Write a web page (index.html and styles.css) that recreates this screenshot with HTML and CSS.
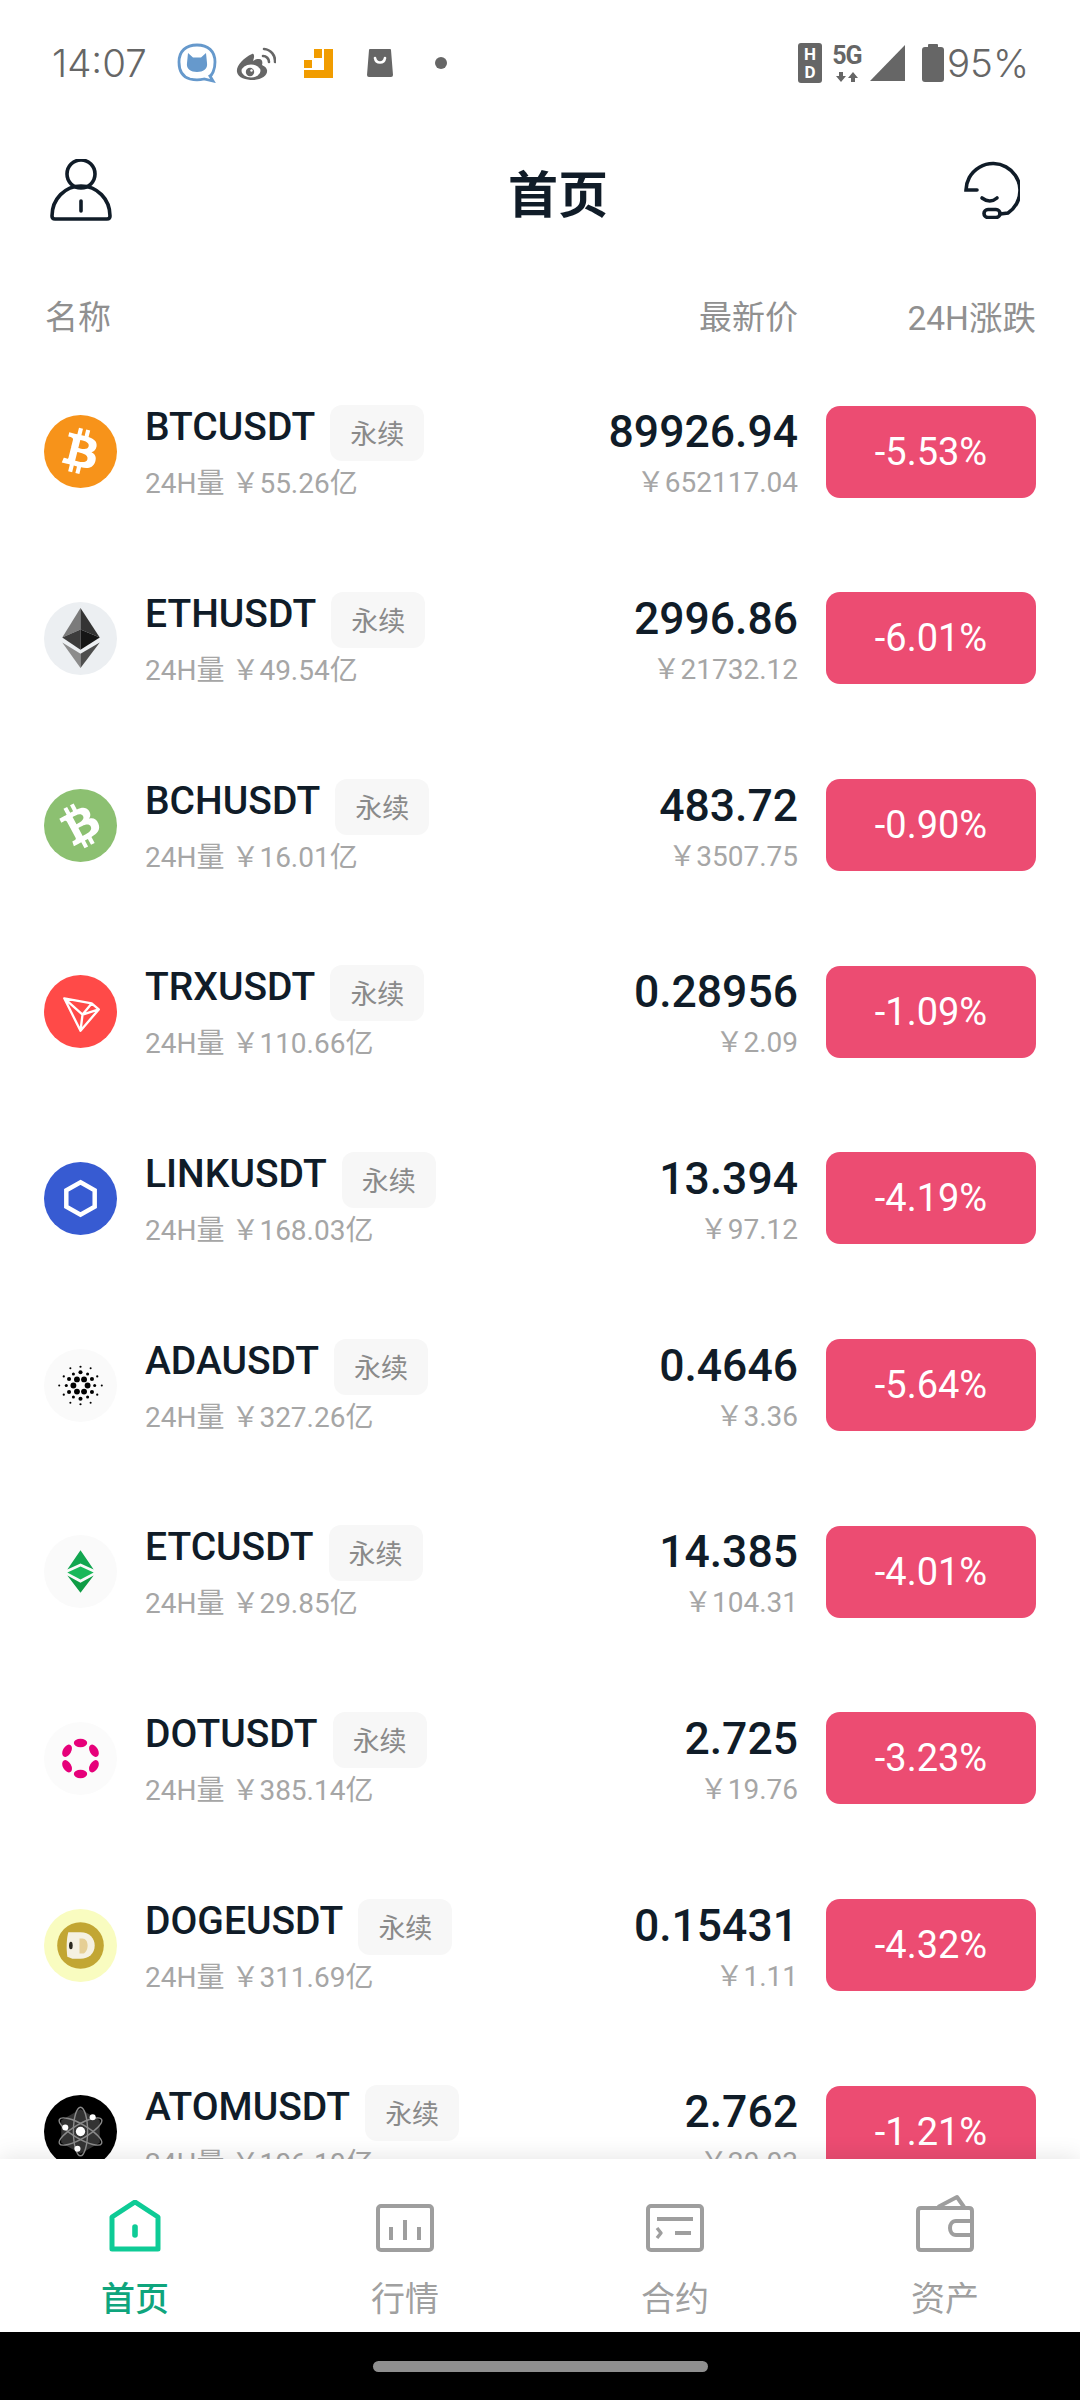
FILE: index.html
```html
<!DOCTYPE html>
<html>
<head>
    <title>首页</title>
    <meta charset="UTF-8">
    <link rel="stylesheet" href="styles.css">
</head>
<body>
    <!-- 状态栏 -->
    <div class="status-bar">
        <span class="status-time">14:07</span>
        <svg class="st-cat" width="40" height="40" viewBox="0 0 40 40">
            <path d="M20 2C31 2 38 8 38 19C38 27 35 32 33 33L36 38L27 36C23 37 17 37 13 36C6 34 2 28 2 19C2 8 9 2 20 2Z" fill="#fff" stroke="#6699cc" stroke-width="2.8"/>
            <path d="M11 10L16 14.5H24L29 10L30 20C31 26 26 29 20 29C14 29 9 26 10 20Z" fill="#6699cc"/>
        </svg>
        <svg class="st-weibo" width="40" height="33" viewBox="0 0 40 33">
            <path d="M16 7C7 11 0 19 1 25C2 31 10 33 17 33C26 33 32 28 31 23C30 19 27 19 26 18C27 15 26 12 23 12C20 12 18 13 17 14C19 9 18 6 16 7Z" fill="#666"/>
            <ellipse cx="15" cy="24" rx="9.5" ry="6.5" fill="#fff"/>
            <circle cx="14" cy="25" r="4.2" fill="#666"/>
            <circle cx="15.5" cy="23.5" r="1.2" fill="#fff"/>
            <path d="M27 9A6 6 0 0 1 33 15M28 2A12 12 0 0 1 39 15" fill="none" stroke="#666" stroke-width="2.6" stroke-linecap="round"/>
        </svg>
        <svg class="st-orange" width="29" height="29" viewBox="0 0 29 29" fill="#f19c00">
            <rect x="10" y="0" width="8" height="9"/>
            <rect x="0" y="11" width="8" height="8"/>
            <path d="M20 0H29V29H0V21H20Z"/>
        </svg>
        <svg class="st-bag" width="26" height="28" viewBox="0 0 26 28">
            <path d="M3 0H23Q24 0 24 1L26 26Q26 28 24 28H2Q0 28 0 26L2 1Q2 0 3 0Z" fill="#666"/>
            <path d="M8 9C9 15 17 15 18 9" fill="none" stroke="#fff" stroke-width="2.6" stroke-linecap="round"/>
        </svg>
        <span class="status-dot"></span>

        <div class="status-right">
            <div class="st-hd"><span>H</span><span>D</span></div>
            <div class="st-net">
                <span class="st-5g">5G</span>
                <svg width="22" height="10" viewBox="0 0 22 10" fill="#666">
                    <path d="M3 0H7V4H10L5 10L0 4H3Z"/>
                    <path d="M15 10H19V6H22L17 0L12 6H15Z"/>
                </svg>
            </div>
            <svg class="st-signal" width="35" height="36" viewBox="0 0 35 36"><path d="M35 0V36H0Z" fill="#666"/></svg>
            <svg class="st-battery" width="22" height="38" viewBox="0 0 22 38" fill="#666">
                <rect x="6" y="0" width="10" height="4" rx="1"/>
                <rect x="0" y="3" width="22" height="35" rx="3"/>
            </svg>
            <span class="status-battery">95%</span>
        </div>
    </div>

    <!-- 标题栏 -->
    <div class="header">
        <svg class="head-icon" width="62" height="62" viewBox="0 0 62 62" fill="none" stroke="#101c28" stroke-width="3.6" stroke-linecap="round">
            <circle cx="31" cy="15" r="14"/>
            <path d="M5 60H57C59 60 60 59 60 57C60 40 47 27 31 27C15 27 2 40 2 57C2 59 3 60 5 60Z"/>
            <path d="M31 42V52"/>
        </svg>
        <h1 class="title">首页</h1>
        <svg class="head-icon" width="56" height="58" viewBox="0 0 56 58" fill="none" stroke="#101c28" stroke-width="3.6" stroke-linecap="round">
            <path d="M13 29H2A27 27 0 1 1 44 52L36 53"/>
            <rect x="20" y="48.5" width="16" height="8" rx="4"/>
            <path d="M18 37Q26 43 33 37"/>
        </svg>
    </div>

    <div class="col-head">
        <span class="col-name">名称</span>
        <span>最新价</span>
        <span class="col-change">24H涨跌</span>
    </div>

    <div class="list">
        <div class="row">
            <svg class="coin" viewBox="0 0 72 72">
                <circle cx="36" cy="36" r="36" fill="#f7931a"/>
                <g transform="scale(1.125)"><path fill="#fff" d="M46.103 27.444c.637-4.258-2.605-6.547-7.038-8.074l1.438-5.768-3.511-.875-1.4 5.616c-.923-.23-1.871-.447-2.813-.662l1.41-5.653-3.509-.875-1.439 5.766c-.764-.174-1.514-.346-2.242-.527l.004-.018-4.842-1.209-.934 3.75s2.605.597 2.55.634c1.422.355 1.679 1.296 1.636 2.042l-1.638 6.571c.098.025.225.061.365.117l-.371-.092-2.296 9.205c-.174.432-.615 1.08-1.609.834.035.051-2.552-.637-2.552-.637l-1.743 4.019 4.569 1.139c.85.213 1.683.436 2.503.646l-1.453 5.834 3.507.875 1.439-5.772c.958.26 1.888.5 2.798.726l-1.434 5.745 3.511.875 1.453-5.823c5.987 1.133 10.489.676 12.384-4.739 1.527-4.36-.076-6.875-3.226-8.515 2.294-.529 4.022-2.038 4.483-5.155zM38.08 38.69c-1.085 4.36-8.426 2.003-10.806 1.412l1.928-7.729c2.38.594 10.012 1.77 8.878 6.317zm1.086-11.309c-.99 3.966-7.1 1.951-9.082 1.457l1.748-7.01c1.982.494 8.365 1.416 7.334 5.553z"/></g>
            </svg>
            <div class="info">
                <div class="name-line"><span class="name">BTCUSDT</span><span class="tag">永续</span></div>
                <div class="sub">24H量 ￥55.26亿</div>
            </div>
            <div class="price-box">
                <div class="price">89926.94</div>
                <div class="sub">￥652117.04</div>
            </div>
            <div class="change">-5.53%</div>
        </div>

        <div class="row">
            <svg class="coin" viewBox="0 0 72 72">
                <circle cx="36" cy="36" r="36" fill="#eceff2"/>
                <path d="M36 6L18 35L36 27Z" fill="#7b7b7b"/>
                <path d="M36 6L55 35L36 27Z" fill="#343434"/>
                <path d="M18 35L36 27V47Z" fill="#3c3c3c"/>
                <path d="M55 35L36 27V47Z" fill="#151515"/>
                <path d="M18 40L36 51V65Z" fill="#8c8c8c"/>
                <path d="M55 40L36 51V65Z" fill="#4e4e4e"/>
            </svg>
            <div class="info">
                <div class="name-line"><span class="name">ETHUSDT</span><span class="tag">永续</span></div>
                <div class="sub">24H量 ￥49.54亿</div>
            </div>
            <div class="price-box">
                <div class="price">2996.86</div>
                <div class="sub">￥21732.12</div>
            </div>
            <div class="change">-6.01%</div>
        </div>

        <div class="row">
            <svg class="coin" viewBox="0 0 72 72">
                <circle cx="36" cy="36" r="36" fill="#8cc071"/>
                <g transform="rotate(-42 36 36) scale(1.125)"><path fill="#fff" d="M46.103 27.444c.637-4.258-2.605-6.547-7.038-8.074l1.438-5.768-3.511-.875-1.4 5.616c-.923-.23-1.871-.447-2.813-.662l1.41-5.653-3.509-.875-1.439 5.766c-.764-.174-1.514-.346-2.242-.527l.004-.018-4.842-1.209-.934 3.75s2.605.597 2.55.634c1.422.355 1.679 1.296 1.636 2.042l-1.638 6.571c.098.025.225.061.365.117l-.371-.092-2.296 9.205c-.174.432-.615 1.08-1.609.834.035.051-2.552-.637-2.552-.637l-1.743 4.019 4.569 1.139c.85.213 1.683.436 2.503.646l-1.453 5.834 3.507.875 1.439-5.772c.958.26 1.888.5 2.798.726l-1.434 5.745 3.511.875 1.453-5.823c5.987 1.133 10.489.676 12.384-4.739 1.527-4.36-.076-6.875-3.226-8.515 2.294-.529 4.022-2.038 4.483-5.155zM38.08 38.69c-1.085 4.36-8.426 2.003-10.806 1.412l1.928-7.729c2.38.594 10.012 1.77 8.878 6.317zm1.086-11.309c-.99 3.966-7.1 1.951-9.082 1.457l1.748-7.01c1.982.494 8.365 1.416 7.334 5.553z"/></g>
            </svg>
            <div class="info">
                <div class="name-line"><span class="name">BCHUSDT</span><span class="tag">永续</span></div>
                <div class="sub">24H量 ￥16.01亿</div>
            </div>
            <div class="price-box">
                <div class="price">483.72</div>
                <div class="sub">￥3507.75</div>
            </div>
            <div class="change">-0.90%</div>
        </div>

        <div class="row">
            <svg class="coin" viewBox="0 0 72 72">
                <circle cx="36" cy="36" r="36" fill="#ff4a48"/>
                <path d="M20 23L47 28L54 34L36 55Z M20 23L38 39L36 55 M38 39L47 28 M38 39L54 34" fill="none" stroke="#fff" stroke-width="2.3" stroke-linejoin="round"/>
            </svg>
            <div class="info">
                <div class="name-line"><span class="name">TRXUSDT</span><span class="tag">永续</span></div>
                <div class="sub">24H量 ￥110.66亿</div>
            </div>
            <div class="price-box">
                <div class="price">0.28956</div>
                <div class="sub">￥2.09</div>
            </div>
            <div class="change">-1.09%</div>
        </div>

        <div class="row">
            <svg class="coin" viewBox="0 0 72 72">
                <circle cx="36" cy="36" r="36" fill="#375bd2"/>
                <path d="M36 20L50 28V44L36 52L22 44V28Z" fill="none" stroke="#fff" stroke-width="4.4"/>
            </svg>
            <div class="info">
                <div class="name-line"><span class="name">LINKUSDT</span><span class="tag">永续</span></div>
                <div class="sub">24H量 ￥168.03亿</div>
            </div>
            <div class="price-box">
                <div class="price">13.394</div>
                <div class="sub">￥97.12</div>
            </div>
            <div class="change">-4.19%</div>
        </div>

        <div class="row">
            <svg class="coin" viewBox="0 0 72 72">
                <circle cx="36" cy="36" r="36" fill="#fafafa"/>
                <g fill="#000">
                    <circle cx="43" cy="36" r="2.9"/><circle cx="39.5" cy="42" r="2.9"/><circle cx="32.5" cy="42" r="2.9"/><circle cx="29" cy="36" r="2.9"/><circle cx="32.5" cy="30" r="2.9"/><circle cx="39.5" cy="30" r="2.9"/>
                    <circle cx="47.3" cy="29.5" r="2"/><circle cx="47.3" cy="42.5" r="2"/><circle cx="36" cy="49" r="2"/><circle cx="24.7" cy="42.5" r="2"/><circle cx="24.7" cy="29.5" r="2"/><circle cx="36" cy="23" r="2"/>
                    <circle cx="50" cy="36" r="1.5"/><circle cx="43" cy="47.3" r="1.5"/><circle cx="29" cy="47.3" r="1.5"/><circle cx="22" cy="36" r="1.5"/><circle cx="29" cy="24.7" r="1.5"/><circle cx="43" cy="24.7" r="1.5"/>
                    <circle cx="52.5" cy="27" r="1.1"/><circle cx="52.5" cy="45" r="1.1"/><circle cx="36" cy="54.5" r="1.1"/><circle cx="19.5" cy="45" r="1.1"/><circle cx="19.5" cy="27" r="1.1"/><circle cx="36" cy="17.5" r="1.1"/>
                    <circle cx="57" cy="36" r="1"/><circle cx="46" cy="53" r="1"/><circle cx="26" cy="53" r="1"/><circle cx="15" cy="36" r="1"/><circle cx="26" cy="19" r="1"/><circle cx="46" cy="19" r="1"/>
                </g>
            </svg>
            <div class="info">
                <div class="name-line"><span class="name">ADAUSDT</span><span class="tag">永续</span></div>
                <div class="sub">24H量 ￥327.26亿</div>
            </div>
            <div class="price-box">
                <div class="price">0.4646</div>
                <div class="sub">￥3.36</div>
            </div>
            <div class="change">-5.64%</div>
        </div>

        <div class="row">
            <svg class="coin" viewBox="0 0 72 72">
                <circle cx="36" cy="36" r="36" fill="#fafafa"/>
                <path d="M36 15L49 34L36 28L23 34Z" fill="#12a650"/>
                <path d="M36 31L49 37L36 44L23 37Z" fill="#19b859"/>
                <path d="M23 40L36 47L49 40L36 57Z" fill="#0f9c45"/>
            </svg>
            <div class="info">
                <div class="name-line"><span class="name">ETCUSDT</span><span class="tag">永续</span></div>
                <div class="sub">24H量 ￥29.85亿</div>
            </div>
            <div class="price-box">
                <div class="price">14.385</div>
                <div class="sub">￥104.31</div>
            </div>
            <div class="change">-4.01%</div>
        </div>

        <div class="row">
            <svg class="coin" viewBox="0 0 72 72">
                <circle cx="36" cy="36" r="36" fill="#fbfbfb"/>
                <g fill="#e6007a">
                    <ellipse cx="36" cy="20.7" rx="6.6" ry="4.1"/>
                    <ellipse cx="36" cy="20.7" rx="6.6" ry="4.1" transform="rotate(60 36 36)"/>
                    <ellipse cx="36" cy="20.7" rx="6.6" ry="4.1" transform="rotate(120 36 36)"/>
                    <ellipse cx="36" cy="20.7" rx="6.6" ry="4.1" transform="rotate(180 36 36)"/>
                    <ellipse cx="36" cy="20.7" rx="6.6" ry="4.1" transform="rotate(240 36 36)"/>
                    <ellipse cx="36" cy="20.7" rx="6.6" ry="4.1" transform="rotate(300 36 36)"/>
                </g>
            </svg>
            <div class="info">
                <div class="name-line"><span class="name">DOTUSDT</span><span class="tag">永续</span></div>
                <div class="sub">24H量 ￥385.14亿</div>
            </div>
            <div class="price-box">
                <div class="price">2.725</div>
                <div class="sub">￥19.76</div>
            </div>
            <div class="change">-3.23%</div>
        </div>

        <div class="row">
            <svg class="coin" viewBox="0 0 72 72">
                <circle cx="36" cy="36" r="36" fill="#f9fcc0"/>
                <circle cx="36" cy="36" r="23" fill="#c2a633"/>
                <path d="M24 23H36C45 23 50 29 50 36C50 44 44 49 36 49H28L23 47C22 40 22 30 24 23Z" fill="#f5f1e2"/>
                <path d="M35 29H38C41 29 43 32 43 36C43 40 41 44 38 44H35Z" fill="#e6cf95"/>
                <ellipse cx="26.5" cy="36" rx="1.8" ry="3.8" fill="#2c2a20"/>
            </svg>
            <div class="info">
                <div class="name-line"><span class="name">DOGEUSDT</span><span class="tag">永续</span></div>
                <div class="sub">24H量 ￥311.69亿</div>
            </div>
            <div class="price-box">
                <div class="price">0.15431</div>
                <div class="sub">￥1.11</div>
            </div>
            <div class="change">-4.32%</div>
        </div>

        <div class="row">
            <svg class="coin" viewBox="0 0 72 72">
                <circle cx="36" cy="36" r="36" fill="#000"/>
                <path d="M36 14L55 25V47L36 58L17 47V25Z" fill="#333"/>
                <g fill="none" stroke="#8a8a8a" stroke-width="1.4">
                    <ellipse cx="36" cy="36" rx="7" ry="24"/>
                    <ellipse cx="36" cy="36" rx="7" ry="24" transform="rotate(60 36 36)"/>
                    <ellipse cx="36" cy="36" rx="7" ry="24" transform="rotate(120 36 36)"/>
                </g>
                <g fill="#fff">
                    <circle cx="36" cy="36" r="4.6"/>
                    <circle cx="48" cy="22" r="3"/>
                    <circle cx="21" cy="32" r="3"/>
                    <circle cx="33" cy="53" r="3"/>
                </g>
            </svg>
            <div class="info">
                <div class="name-line"><span class="name">ATOMUSDT</span><span class="tag">永续</span></div>
                <div class="sub">24H量 ￥106.10亿</div>
            </div>
            <div class="price-box">
                <div class="price">2.762</div>
                <div class="sub">￥20.03</div>
            </div>
            <div class="change">-1.21%</div>
        </div>
    </div>

    <!-- 底部导航 -->
    <div class="tabs">
        <div class="tab tab-on">
            <div class="tab-icon">
                <svg width="52" height="52" viewBox="0 0 52 52" fill="none" stroke="#0ecb96" stroke-width="5" stroke-linejoin="round" stroke-linecap="round">
                    <path d="M3 17L26 2L49 17V49H3Z"/>
                    <path d="M26 27V35" stroke-width="5.6"/>
                </svg>
            </div>
            <span>首页</span>
        </div>
        <div class="tab">
            <div class="tab-icon">
                <svg width="58" height="48" viewBox="0 0 58 48" fill="none" stroke="#9e9e9e" stroke-width="4" stroke-linejoin="round">
                    <rect x="2" y="2" width="54" height="44" rx="3"/>
                    <path d="M15 23V36M29 16V36M43 23V36"/>
                </svg>
            </div>
            <span>行情</span>
        </div>
        <div class="tab">
            <div class="tab-icon">
                <svg width="58" height="48" viewBox="0 0 58 48" fill="none" stroke="#9e9e9e" stroke-width="4" stroke-linejoin="round">
                    <rect x="2" y="2" width="54" height="44" rx="3"/>
                    <path d="M11 15H47M29 29H45"/>
                    <path d="M11 24L15 29L11 34" stroke-width="3.4"/>
                </svg>
            </div>
            <span>合约</span>
        </div>
        <div class="tab">
            <div class="tab-icon">
                <svg width="58" height="58" viewBox="0 0 58 58" fill="none" stroke="#9e9e9e" stroke-width="4" stroke-linejoin="round">
                    <path d="M22 13L41 3L48 13"/>
                    <path d="M5 14H53C55 14 56 15 56 17V53C56 55 55 56 53 56H5C3 56 2 55 2 53V17C2 15 3 14 5 14Z"/>
                    <path d="M56 27H40C32 27 32 41 40 41H56"/>
                </svg>
            </div>
            <span>资产</span>
        </div>
    </div>

    <div class="nav-bar"><div class="nav-pill"></div></div>
</body>
</html>
```

FILE: styles.css
```css
* {
    box-sizing: border-box;
}

body {
    margin: 0;
    height: 2400px;
    display: flex;
    flex-direction: column;
    overflow: hidden;
    background-color: #fff;
    font-family: Roboto, "Noto Sans CJK SC", sans-serif;
    color: #101c28;
}

/* 状态栏 */
.status-bar {
    height: 126px;
    flex-shrink: 0;
    display: flex;
    align-items: center;
    padding-left: 52px;
    padding-right: 51px;
    color: #666;
}

.status-time,
.status-battery {
    font-family: Inter, Roboto, sans-serif;
    font-weight: 300;
    font-size: 38.5px;
}

.status-time {
    width: 125px;
}

.st-weibo {
    margin-left: 19px;
}

.st-orange {
    margin-left: 28px;
}

.st-bag {
    margin-left: 34px;
}

.status-dot {
    width: 12px;
    height: 12px;
    margin-left: 42px;
    border-radius: 50%;
    background-color: #666;
}

.status-right {
    margin-left: auto;
    display: flex;
    align-items: center;
}

.st-hd {
    width: 24px;
    height: 40px;
    padding-top: 2px;
    display: flex;
    flex-direction: column;
    align-items: center;
    border-radius: 3px;
    background-color: #666;
    color: #fff;
    font-size: 17px;
    line-height: 18px;
    font-weight: 700;
}

.st-net {
    width: 32px;
    margin-left: 9px;
    display: flex;
    flex-direction: column;
    align-items: center;
    gap: 4px;
}

.st-5g {
    font-size: 25px;
    line-height: 24px;
    font-weight: 700;
    letter-spacing: -1px;
}

.st-signal {
    margin-left: 7px;
}

.st-battery {
    margin-left: 17px;
}

.status-battery {
    margin-left: 3px;
}

/* 标题栏 */
.header {
    height: 136px;
    flex-shrink: 0;
    display: flex;
    align-items: center;
    justify-content: space-between;
    padding: 0 60px 0 50px;
}

.head-icon {
    margin-bottom: 9px;
}

.title {
    margin: 3px 0 0 40px;
    font-size: 50px;
    line-height: 60px;
    font-weight: 700;
}

.col-head {
    height: 96.5px;
    flex-shrink: 0;
    display: flex;
    align-items: center;
    padding: 10px 44px 0 45px;
    font-size: 33px;
    color: #909090;
}

.col-name {
    flex: 1;
}

.col-change {
    width: 210px;
    margin-left: 28px;
    text-align: right;
    font-size: 33.5px;
}

/* 列表 */
.list {
    flex: 1;
    min-height: 0;
    overflow: hidden;
    padding: 0 44px;
}

.row {
    height: 186.67px;
    display: flex;
    align-items: center;
}

.coin {
    width: 73px;
    height: 73px;
    flex-shrink: 0;
    margin-right: 28px;
}

.info {
    flex: 1;
    min-width: 0;
}

.name-line {
    display: flex;
    align-items: flex-start;
    height: 60px;
}

.name {
    font-size: 39px;
    line-height: 52px;
    font-weight: 500;
    white-space: nowrap;
}

.tag {
    height: 56px;
    width: 94px;
    margin: 4px 0 0 15px;
    border-radius: 12px;
    background-color: #f7f7f7;
    font-size: 27px;
    line-height: 60px;
    text-align: center;
    color: #8a8a8a;
}

.sub {
    margin-top: 5px;
    font-size: 28px;
    line-height: 36px;
    color: #a6a6a6;
    white-space: nowrap;
}

.price-box {
    padding-top: 4px;
    text-align: right;
}

.price {
    font-size: 44.5px;
    line-height: 52px;
    font-weight: 500;
}

.price-box .sub {
    margin-top: 7px;
}

.change {
    width: 210px;
    height: 92px;
    margin-left: 28px;
    flex-shrink: 0;
    border-radius: 14px;
    background-color: #ec4c72;
    color: #fff;
    font-size: 38px;
    line-height: 93px;
    text-align: center;
}

/* 底部导航 */
.tabs {
    height: 173px;
    flex-shrink: 0;
    display: flex;
    background-color: #fff;
    box-shadow: 0 -2px 22px rgba(0, 0, 0, 0.1);
    z-index: 1;
}

.tab {
    flex: 1;
    display: flex;
    flex-direction: column;
    align-items: center;
    padding-top: 37px;
    font-size: 34px;
    line-height: 44px;
    color: #a0a0a0;
}

.tab-icon {
    height: 56px;
    margin-bottom: 25px;
    display: flex;
    align-items: flex-end;
}

.tab-on {
    color: #0fa57d;
    font-weight: 500;
}

.nav-bar {
    height: 68px;
    flex-shrink: 0;
    display: flex;
    align-items: center;
    justify-content: center;
    background-color: #000;
}

.nav-pill {
    width: 335px;
    height: 11px;
    border-radius: 6px;
    background-color: #8f8f8f;
}
```
